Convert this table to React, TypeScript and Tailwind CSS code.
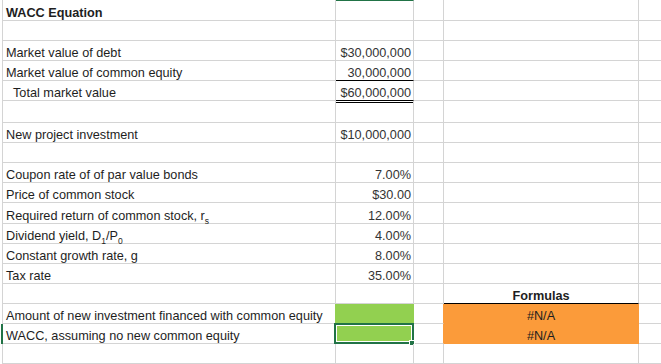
import React from "react";

type Row = {
  h: string;
  label?: React.ReactNode;
  value?: string;
  bold?: boolean;
  indent?: boolean;
  valueLine?: boolean;
  doubleTop?: boolean;
  formulas?: boolean;
  green?: boolean;
  selected?: boolean;
  na?: boolean;
  colHead?: boolean;
};

const Sub = ({ children }: { children: React.ReactNode }) => (
  <sub className="text-[8.5px] align-sub leading-none">{children}</sub>
);

const rows: Row[] = [
  { h: "h-[21px]", label: "WACC Equation", bold: true, colHead: true },
  { h: "h-[20px]" },
  { h: "h-[20px]", label: "Market value of debt", value: "$30,000,000" },
  { h: "h-[20px]", label: "Market value of common equity", value: "30,000,000", valueLine: true },
  { h: "h-[20px]", label: "Total market value", indent: true, value: "$60,000,000", valueLine: true },
  { h: "h-[22px]", doubleTop: true },
  { h: "h-[20px]", label: "New project investment", value: "$10,000,000" },
  { h: "h-[20px]" },
  { h: "h-[20px]", label: "Coupon rate of of par value bonds", value: "7.00%" },
  { h: "h-[20px]", label: "Price of common stock", value: "$30.00" },
  {
    h: "h-[21px]",
    label: (
      <>
        Required return of common stock, r<Sub>s</Sub>
      </>
    ),
    value: "12.00%",
  },
  {
    h: "h-[20px]",
    label: (
      <>
        Dividend yield, D<Sub>1</Sub>/P<Sub>0</Sub>
      </>
    ),
    value: "4.00%",
  },
  { h: "h-[20px]", label: "Constant growth rate, g", value: "8.00%" },
  { h: "h-[20px]", label: "Tax rate", value: "35.00%" },
  { h: "h-[20px]", formulas: true },
  { h: "h-[20px]", label: "Amount of new investment financed with common equity", green: true, na: true },
  { h: "h-[20px]", label: "WACC, assuming no new common equity", green: true, selected: true, na: true },
  { h: "h-[20px]" },
];

const cell = "flex items-end leading-[14px] border-b border-r border-[#d4d4d4] whitespace-nowrap";

export default function App() {
  return (
    <div
      className="w-[661px] h-[364px] overflow-hidden bg-white text-[12.7px] text-[#1e1e1e]"
      style={{ fontFamily: '"Liberation Sans", Arial, sans-serif' }}
    >
      {rows.map((r, i) => (
        <div key={i} className={`flex ${r.h}`}>
          {/* row header edge */}
          <div
            className={`w-[3px] shrink-0 ${
              r.selected ? "border-r-2 border-[#217346]" : "border-r border-[#d4d4d4]"
            }`}
          />

          {/* column A */}
          <div
            className={`${cell} w-[333px] shrink-0 ${r.indent ? "pl-[10px]" : "pl-[3px]"} ${
              r.bold ? "font-bold" : ""
            } ${r.green ? "border-r-[#92d050]" : ""}`}
          >
            {r.label}
          </div>

          {/* column B */}
          {r.doubleTop ? (
            <div className={`${cell} w-[78px] shrink-0 !items-start pt-[1px]`}>
              <div className="w-full border-t border-black" />
            </div>
          ) : (
            <div
              className={`${cell} relative w-[78px] shrink-0 justify-end pr-[2px] text-[#333] ${
                r.valueLine ? "border-b-black" : ""
              } ${r.green ? "bg-[#92d050] border-r-[#92d050]" : ""} ${
                r.colHead ? "border-t border-t-[#217346]" : ""
              }`}
            >
              {r.value}
              {r.selected && (
                <div className="absolute -left-[2px] -top-[1px] -right-[1px] -bottom-[1px] border-2 border-[#217346]">
                  <div className="h-full w-full border border-white" />
                  <div className="absolute -right-[3px] -bottom-[4px] w-[6px] h-[6px] bg-[#217346] border border-white" />
                </div>
              )}
            </div>
          )}

          {/* column C */}
          <div className={`${cell} w-[30px] shrink-0 ${r.na ? "border-r-[#fb9b3a]" : ""}`} />

          {/* column D */}
          <div
            className={`${cell} w-[195px] shrink-0 justify-center ${
              r.formulas ? "font-bold border-b-black" : ""
            } ${r.na ? "bg-[#fb9b3a] border-[#fb9b3a]" : ""}`}
          >
            {r.formulas ? "Formulas" : r.na ? "#N/A" : null}
          </div>

          {/* column E */}
          <div className="flex-1 border-b border-[#d4d4d4]" />
        </div>
      ))}
    </div>
  );
}
